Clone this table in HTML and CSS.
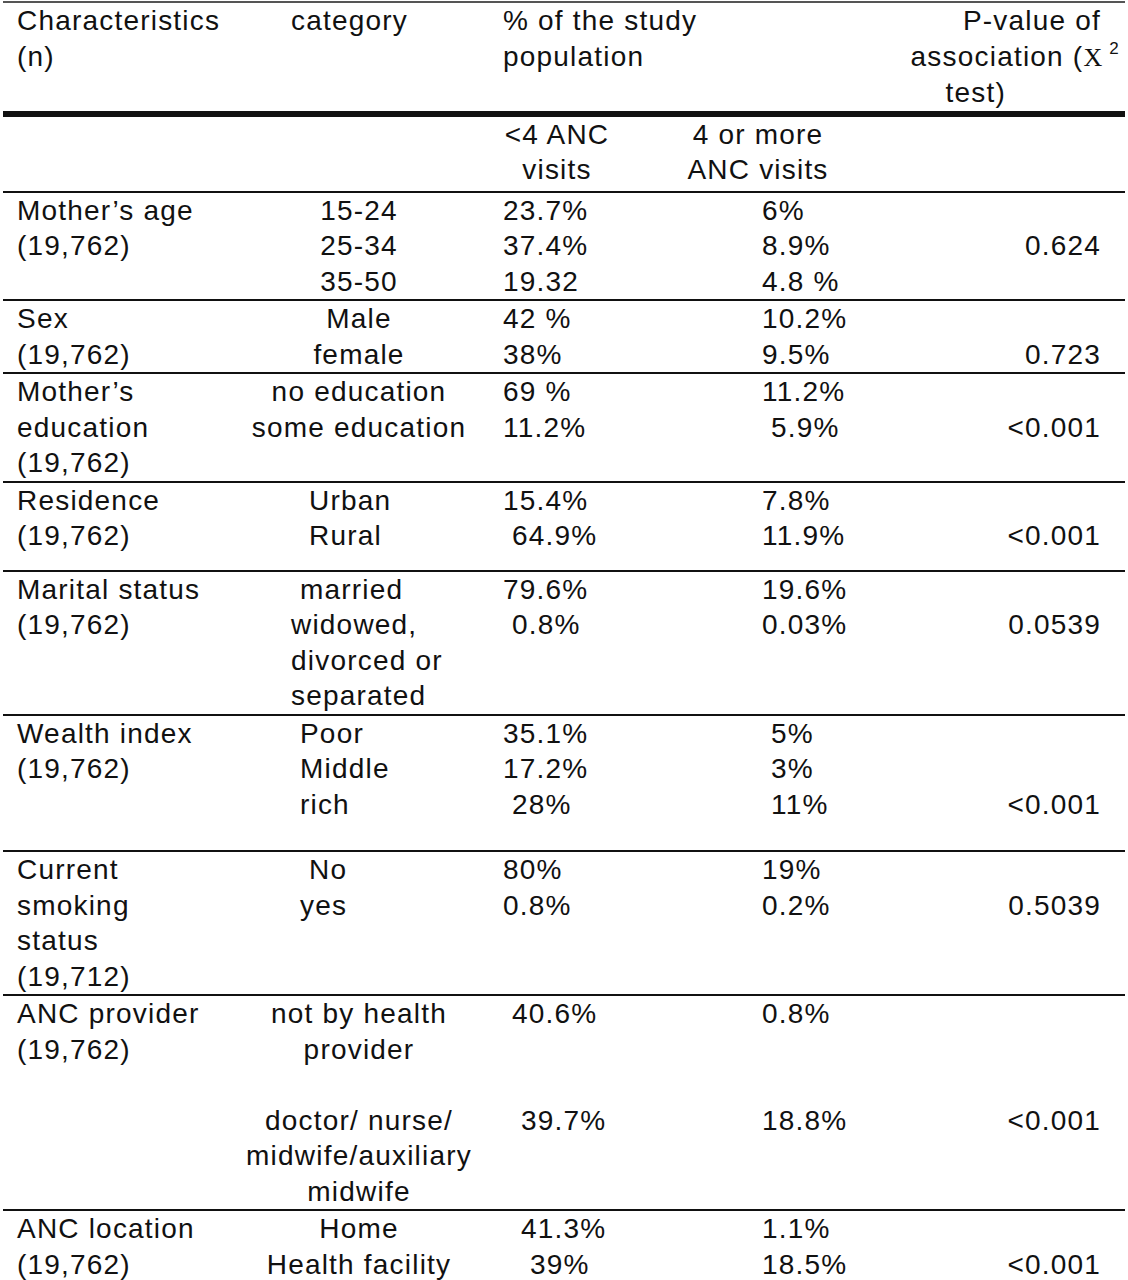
FILE: index.html
```html
<!DOCTYPE html>
<html lang="en">
<head>
    <meta charset="UTF-8">
    <meta name="viewport" content="width=device-width, initial-scale=1.0">
    <title>ANC visits by characteristics</title>
    <link rel="stylesheet" href="styles.css">
</head>
<body>
    <table class="study">
        <colgroup>
            <col class="col-char">
            <col class="col-cat">
            <col class="col-low">
            <col class="col-high">
            <col class="col-p">
        </colgroup>
        <thead>
            <tr class="head">
                <td class="char">Characteristics<br>(n)</td>
                <td class="cat-left">category</td>
                <td class="low" colspan="2">% of the study<br>population</td>
                <td class="p-head">
                    <div class="p-line1">P-value of</div>
                    <div class="p-line2">association (<span class="chi">Χ</span><sup>2</sup></div>
                    <div class="p-line3">test)</div>
                </td>
            </tr>
            <tr class="sub-head">
                <td></td>
                <td></td>
                <td class="low-head">&lt;4 ANC<br>visits</td>
                <td class="high-head">4 or more<br>ANC visits</td>
                <td></td>
            </tr>
        </thead>
        <tbody>
            <tr>
                <td class="char">Mother’s age<br>(19,762)</td>
                <td class="cat">15-24<br>25-34<br>35-50</td>
                <td class="low">23.7%<br>37.4%<br>19.32</td>
                <td class="high">6%<br>8.9%<br>4.8 %</td>
                <td class="p"><br>0.624</td>
            </tr>
            <tr>
                <td class="char">Sex<br>(19,762)</td>
                <td class="cat">Male<br>female</td>
                <td class="low">42 %<br>38%</td>
                <td class="high">10.2%<br>9.5%</td>
                <td class="p"><br>0.723</td>
            </tr>
            <tr>
                <td class="char">Mother’s<br>education<br>(19,762)</td>
                <td class="cat">no education<br>some education</td>
                <td class="low">69 %<br>11.2%</td>
                <td class="high">11.2%<br>&nbsp;5.9%</td>
                <td class="p"><br>&lt;0.001</td>
            </tr>
            <tr class="pad-small">
                <td class="char">Residence<br>(19,762)</td>
                <td class="cat-left">&nbsp;&nbsp;Urban<br>&nbsp;&nbsp;Rural</td>
                <td class="low">15.4%<br>&nbsp;64.9%</td>
                <td class="high">7.8%<br>11.9%</td>
                <td class="p"><br>&lt;0.001</td>
            </tr>
            <tr>
                <td class="char">Marital status<br>(19,762)</td>
                <td class="cat-left">&nbsp;married<br>widowed,<br>divorced or<br>separated</td>
                <td class="low">79.6%<br>&nbsp;0.8%</td>
                <td class="high">19.6%<br>0.03%</td>
                <td class="p"><br>0.0539</td>
            </tr>
            <tr class="pad-large">
                <td class="char">Wealth index<br>(19,762)</td>
                <td class="cat-left">&nbsp;Poor<br>&nbsp;Middle<br>&nbsp;rich</td>
                <td class="low">35.1%<br>17.2%<br>&nbsp;28%</td>
                <td class="high">&nbsp;5%<br>&nbsp;3%<br>&nbsp;11%</td>
                <td class="p"><br><br>&lt;0.001</td>
            </tr>
            <tr>
                <td class="char">Current<br>smoking<br>status<br>(19,712)</td>
                <td class="cat-left">&nbsp;&nbsp;No<br>&nbsp;yes</td>
                <td class="low">80%<br>0.8%</td>
                <td class="high">19%<br>0.2%</td>
                <td class="p"><br>0.5039</td>
            </tr>
            <tr>
                <td class="char">ANC provider<br>(19,762)</td>
                <td class="cat">not by health<br>provider<br><br>doctor/ nurse/<br>midwife/auxiliary<br>midwife</td>
                <td class="low">&nbsp;40.6%<br><br><br>&nbsp;&nbsp;39.7%</td>
                <td class="high">0.8%<br><br><br>18.8%</td>
                <td class="p"><br><br><br>&lt;0.001</td>
            </tr>
            <tr>
                <td class="char">ANC location<br>(19,762)</td>
                <td class="cat">Home<br>Health facility</td>
                <td class="low">&nbsp;&nbsp;41.3%<br>&nbsp;&nbsp;&nbsp;39%</td>
                <td class="high">1.1%<br>18.5%</td>
                <td class="p"><br>&lt;0.001</td>
            </tr>
        </tbody>
    </table>
</body>
</html>
```

FILE: styles.css
```css
body {
    margin: 0;
    background-color: #fff;
    font-family: "Liberation Sans", Arial, sans-serif;
    color: #111;
}

.study {
    width: 1122px;
    margin: 1px 3px 0;
    border-collapse: collapse;
    table-layout: fixed;
    border-top: 2px solid #555;
    font-size: 28px;
    line-height: 35.5px;
    letter-spacing: 1.2px;
}

.col-char { width: 237px; }
.col-cat { width: 238px; }
.col-low { width: 202px; }
.col-high { width: 156px; }
.col-p { width: 289px; }

.study td {
    padding: 0;
    vertical-align: top;
    white-space: nowrap;
}

.study tr {
    border-bottom: 2px solid #111;
}

.study tr.head {
    border-bottom: 6px solid #111;
}

.sub-head td {
    padding-bottom: 3px;
}

.pad-small td {
    padding-bottom: 16px;
}

.pad-large td {
    padding-bottom: 28px;
}

.char {
    padding-left: 14px !important;
}

.cat {
    text-align: center;
}

.cat-left {
    padding-left: 51px !important;
}

.low {
    padding-left: 25px !important;
}

.high {
    padding-left: 82px !important;
}

.low-head {
    text-align: center;
    padding-left: 25px !important;
    padding-right: 69px !important;
}

.high-head {
    text-align: center;
}

.p {
    text-align: right;
    padding-right: 24px !important;
}

.p-head {
    text-align: right;
}

.p-line1 {
    padding-right: 24px;
}

.p-line2 {
    padding-right: 5px;
}

.p-line3 {
    padding-right: 119px;
}

.chi {
    font-family: "Liberation Serif", serif;
    font-size: 26px;
}

.p-head sup {
    font-size: 17px;
    line-height: 0;
    margin-left: 6px;
    vertical-align: 12px;
}
```
